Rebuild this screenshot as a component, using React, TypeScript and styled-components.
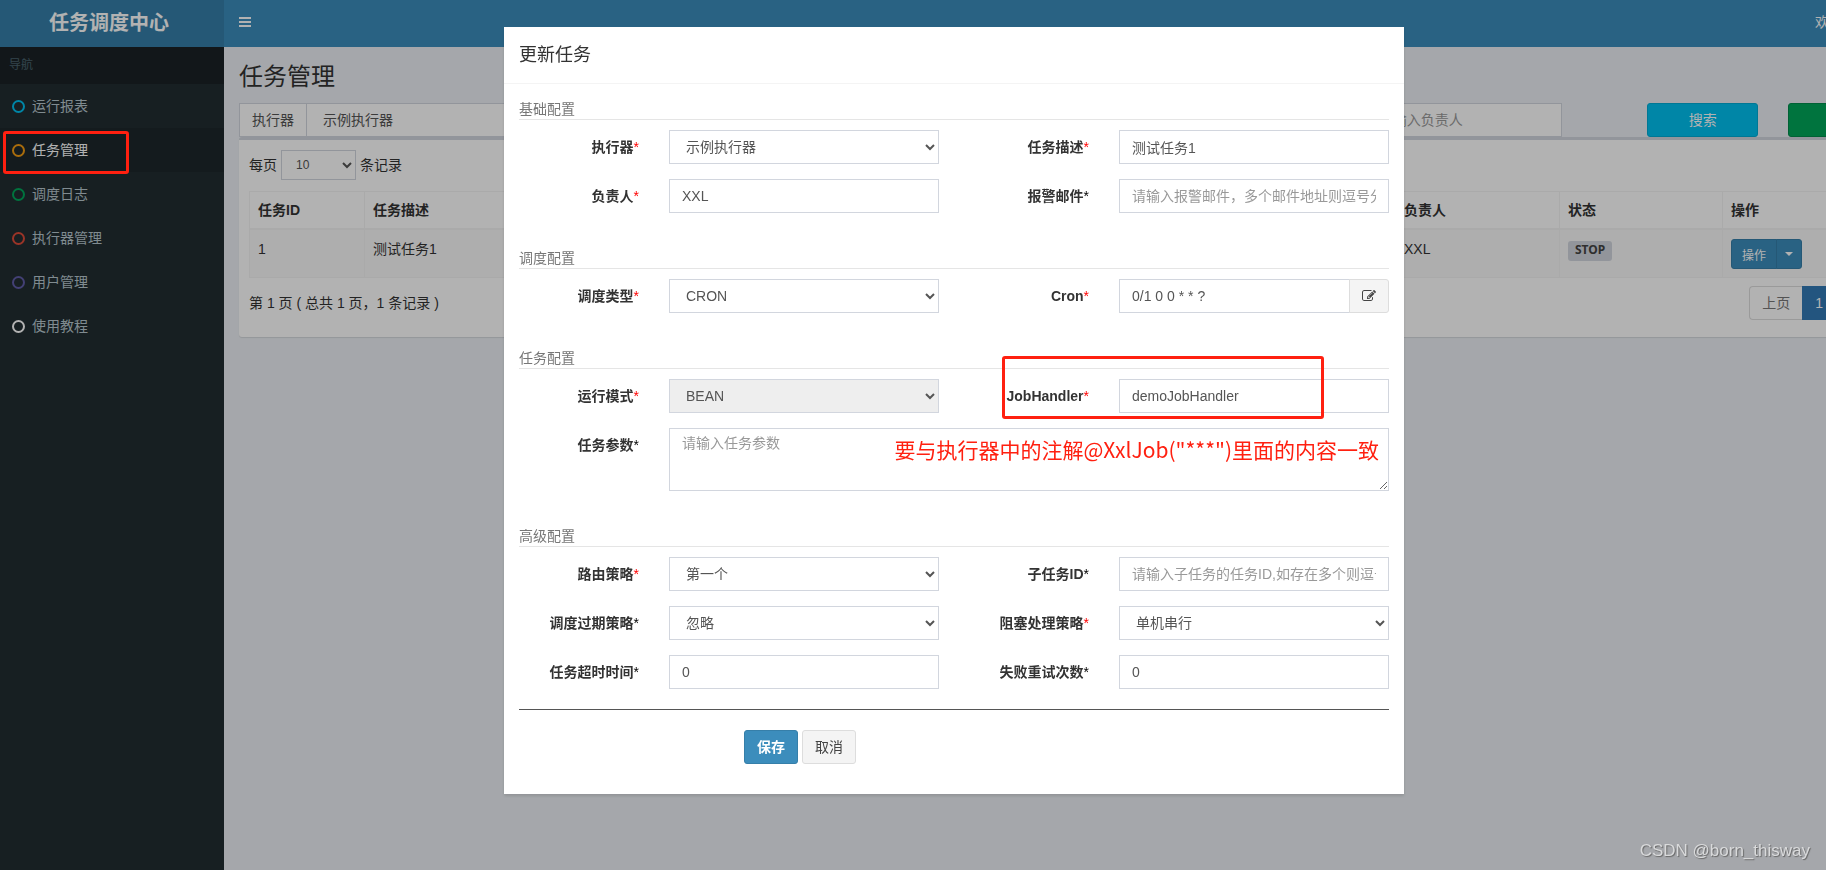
import React from 'react';
import styled, { createGlobalStyle, css } from 'styled-components';

const GlobalStyle = createGlobalStyle`
  *, *::before, *::after { box-sizing: border-box; }
  html, body, #root { height: 100%; }
  body {
    margin: 0;
    overflow: hidden;
    background: #ecf0f5;
    color: #333;
    font: 14px/20px "Liberation Sans", "Noto Sans CJK SC", sans-serif;
  }
  button, input, select, textarea { font-family: inherit; }
`;

const Viewport = styled.div`
  min-height: 100vh;
  overflow: hidden;
  display: flex;
`;

/* The console is wider than the window; its right part runs past the edge. */
const Frame = styled.div`
  flex: 1;
  min-width: 0;
  margin-right: -88px;
  display: flex;
`;

const Sidebar = styled.aside`
  flex: 0 0 224px;
  min-height: 100vh;
  background: #222d32;
`;

const Logo = styled.a`
  display: block;
  height: 47px;
  padding-right: 6px;
  background: #367fa9;
  color: #fff;
  font-size: 20px;
  font-weight: 700;
  line-height: 46px;
  text-align: center;
  text-decoration: none;
`;

const NavHeading = styled.div`
  padding: 8px 9px 9px;
  background: #1a2226;
  color: #4b646f;
  font-size: 12px;
`;

const NavList = styled.ul`
  list-style: none;
  margin: 0;
  padding: 0;
`;

const NavItem = styled.li`
  position: relative;
`;

const NavLink = styled.a<{ $active?: boolean }>`
  display: flex;
  align-items: center;
  gap: 7px;
  height: 44px;
  padding-left: 12px;
  background: ${p => (p.$active ? '#1e282c' : 'transparent')};
  color: ${p => (p.$active ? '#fff' : '#b8c7ce')};
  text-decoration: none;
`;

const Ring = styled.span<{ $color: string }>`
  width: 13px;
  height: 13px;
  border: 2px solid ${p => p.$color};
  border-radius: 50%;
`;

const markBox = css`
  position: absolute;
  z-index: 30;
  border: 3px solid #ff2010;
  border-radius: 3px;
  pointer-events: none;
`;

const NavMark = styled.span`
  ${markBox}
  left: 3px;
  top: 3px;
  width: 126px;
  height: 43px;
`;

const Main = styled.main`
  flex: 1;
  min-width: 0;
`;

const TopBar = styled.header`
  display: flex;
  align-items: center;
  justify-content: space-between;
  height: 47px;
  padding: 0 15px 3px;
  background: #3c8dbc;
  color: #fff;
`;

const MenuButton = styled.button`
  display: flex;
  padding: 0;
  border: 0;
  background: none;
  color: #fff;
`;

const UserLink = styled.a`
  width: 84px;
  color: #fff;
  text-decoration: none;
`;

const Content = styled.div`
  padding: 15px;
`;

const PageTitle = styled.h1`
  margin: 0 0 12px;
  font-size: 24px;
  font-weight: 400;
  line-height: 29px;
`;

const FilterRow = styled.div`
  display: grid;
  grid-template-columns: repeat(12, minmax(0, 1fr));
  gap: 30px;
`;

const InputGroup = styled.div`
  grid-column: span 3;
  display: flex;
`;

const Addon = styled.label`
  flex: none;
  height: 34px;
  padding: 6px 12px;
  border: 1px solid #d2d6de;
  border-right: 0;
  background: #fff;
  color: #555;
`;

const control = css`
  display: block;
  width: 100%;
  height: 34px;
  padding: 6px 12px;
  border: 1px solid #d2d6de;
  border-radius: 0;
  background-color: #fff;
  color: #555;
  font-size: 14px;
  line-height: 20px;
  opacity: 1;
  &::placeholder { color: #999; opacity: 1; }
`;

const Input = styled.input`${control}`;
const Select = styled.select`
  ${control}
  &:disabled { background-color: #eee; color: #555; opacity: 1; }
`;
const TextArea = styled.textarea`
  ${control}
  height: 63px;
  padding-top: 4px;
  resize: vertical;
`;

const OwnerFilter = styled.div`
  grid-column: 9 / span 2;
  width: 196px;
`;

const tones = {
  info: css`background: #00c0ef; border-color: #00acd6; color: #fff;`,
  success: css`background: #00a65a; border-color: #008d4c; color: #fff;`,
  primary: css`background: #3c8dbc; border-color: #367fa9; color: #fff;`,
  plain: css`background: #f4f4f4; border-color: #ddd; color: #444;`,
};

const Button = styled.button<{ $tone: keyof typeof tones; $strong?: boolean }>`
  height: 34px;
  padding: 0 12px;
  border: 1px solid;
  border-radius: 3px;
  font-size: 14px;
  font-weight: ${p => (p.$strong ? 700 : 400)};
  line-height: 20px;
  ${p => tones[p.$tone]}
`;

const Box = styled.section`
  height: 200px;
  border-top: 3px solid #d2d6de;
  border-radius: 3px;
  background: #fff;
  box-shadow: 0 1px 1px rgba(0, 0, 0, 0.1);
  padding: 10px;
`;

const LengthRow = styled.label`
  display: flex;
  align-items: center;
  gap: 4px;
  margin-bottom: 11px;
`;

const SmallSelect = styled.select`
  ${control}
  width: 75px;
  height: 30px;
  padding: 5px 10px;
  font-size: 12px;
  line-height: 18px;
`;

const Table = styled.table`
  width: 100%;
  table-layout: fixed;
  border-collapse: separate;
  border-spacing: 0;
  border: 1px solid #f4f4f4;
  border-right: 0;
  margin-bottom: 8px;
`;

const Th = styled.th<{ $width?: number }>`
  width: ${p => (p.$width ? `${p.$width}px` : 'auto')};
  padding: 8px;
  border-right: 1px solid #f4f4f4;
  border-bottom: 2px solid #f4f4f4;
  text-align: left;
`;

const Td = styled.td`
  height: 47px;
  padding: 9px 8px 8px;
  border-right: 1px solid #f4f4f4;
  background: #f9f9f9;
  vertical-align: top;
`;

const StatusTag = styled.small`
  display: block;
  width: fit-content;
  padding: 0 7px 2px;
  margin-top: 2px;
  border-radius: 3px;
  background: #d2d6de;
  color: #444;
  font: 700 12px/18px "Noto Sans", sans-serif;
`;

const SplitButton = styled.div`
  display: flex;
`;

const SmallButton = styled.button<{ $side: 'left' | 'right' }>`
  display: flex;
  align-items: center;
  justify-content: center;
  width: ${p => (p.$side === 'left' ? 46 : 26)}px;
  height: 30px;
  margin-left: ${p => (p.$side === 'left' ? 0 : -1)}px;
  padding: 0;
  border: 1px solid #367fa9;
  border-radius: ${p => (p.$side === 'left' ? '3px 0 0 3px' : '0 3px 3px 0')};
  background: #3c8dbc;
  color: #fff;
  font-size: 12px;
`;

const Caret = styled.span`
  border-top: 4px solid;
  border-left: 4px solid transparent;
  border-right: 4px solid transparent;
`;

const TableFooter = styled.div`
  display: flex;
  justify-content: space-between;
  align-items: center;
  height: 34px;
`;

const Pager = styled.nav`
  display: flex;
`;

const PageLink = styled.a<{ $current?: boolean }>`
  height: 34px;
  padding: 6px 12px;
  border: 1px solid ${p => (p.$current ? '#337ab7' : '#ddd')};
  background: ${p => (p.$current ? '#337ab7' : '#fff')};
  color: ${p => (p.$current ? '#fff' : '#777')};
  text-decoration: none;
  &:first-child { border-right: 0; border-radius: 4px 0 0 4px; }
  &:last-child { border-left: 0; border-radius: 0 4px 4px 0; }
`;

const Backdrop = styled.div`
  position: fixed;
  inset: 0 -88px 0 0;
  z-index: 10;
  padding: 27px 6px 0 0;
  background: rgba(0, 0, 0, 0.3);
`;

const Dialog = styled.div`
  width: 900px;
  max-width: 100%;
  margin: 0 auto;
  background: #fff;
  box-shadow: 0 2px 3px rgba(0, 0, 0, 0.125);
`;

const DialogHeader = styled.header`
  padding: 15px;
  border-bottom: 1px solid #f4f4f4;
`;

const DialogTitle = styled.h2`
  margin: 0;
  font-size: 18px;
  font-weight: 400;
  line-height: 26px;
`;

const Form = styled.form`
  padding: 15px 15px 30px;
`;

const Group = styled.fieldset`
  min-width: 0;
  margin: 0 0 35px;
  padding: 0;
  border: 0;
  &:last-of-type { margin-bottom: 20px; }
`;

const Legend = styled.legend`
  width: 100%;
  margin-bottom: 10px;
  padding: 0;
  border-bottom: 1px solid #e5e5e5;
  color: #777;
`;

const Fields = styled.div`
  position: relative;
  display: grid;
  grid-template-columns: minmax(0, 4fr) minmax(0, 9fr) minmax(0, 4fr) minmax(0, 9fr);
  gap: 15px 30px;
`;

const Label = styled.label`
  padding-top: 7px;
  font-weight: 700;
  text-align: right;
  white-space: nowrap;
`;

const Star = styled.span<{ $required?: boolean }>`
  color: ${p => (p.$required ? '#f00' : '#000')};
  font-weight: 400;
`;

const Addable = styled.div`
  display: flex;
`;

const EditButton = styled.button`
  flex: 0 0 40px;
  display: flex;
  align-items: center;
  justify-content: center;
  margin-left: -1px;
  padding: 0;
  border: 1px solid #ddd;
  border-radius: 0 3px 3px 0;
  background: #f4f4f4;
  color: #444;
`;

const WideField = styled.div`
  grid-column: span 3;
  position: relative;
`;

const HandlerMark = styled.span`
  ${markBox}
  top: -23px;
  right: 65px;
  width: 322px;
  height: 63px;
`;

const Note = styled.p`
  position: absolute;
  top: 6px;
  right: 10px;
  margin: 0;
  color: #ff2010;
  font: 21px/30px "Noto Sans CJK SC", sans-serif;
  white-space: nowrap;
  pointer-events: none;
`;

const Divider = styled.hr`
  margin: 0 0 20px;
  border: 0;
  border-top: 1px solid #555;
`;

const Actions = styled.div`
  display: flex;
  gap: 4px;
  padding-left: 225px;
`;

const Watermark = styled.div`
  position: fixed;
  right: 16px;
  bottom: 9px;
  z-index: 40;
  color: #d9dadb;
  font-size: 17px;
  line-height: 20px;
  text-shadow: 1px 1px 1px #666;
`;

function BarsIcon() {
  return (
    <svg width="12" height="10" viewBox="0 0 12 10" fill="currentColor" aria-hidden="true">
      <rect width="12" height="2" />
      <rect y="4" width="12" height="2" />
      <rect y="8" width="12" height="2" />
    </svg>
  );
}

function EditIcon() {
  return (
    <svg width="14" height="14" viewBox="0 0 1792 1792" fill="currentColor" aria-hidden="true">
      <path d="M888 1184l116-116-152-152-116 116v56h96v96h56zm440-720q-16-16-33 1l-350 350q-17 17-1 33t33-1l350-350q17-17 1-33zm80 594v190q0 119-84.5 203.5t-203.5 84.5h-832q-119 0-203.5-84.5t-84.5-203.5v-832q0-119 84.5-203.5t203.5-84.5h832q63 0 117 25 15 7 18 23 3 17-9 29l-49 49q-14 14-32 8-23-6-45-6h-832q-66 0-113 47t-47 113v832q0 66 47 113t113 47h832q66 0 113-47t47-113v-126q0-13 9-22l64-64q15-15 35-7t20 29zm-96-738l288 288-672 672h-288v-288zm444 132l-92 92-288-288 92-92q28-28 68-28t68 28l152 152q28 28 28 68t-28 68z" />
    </svg>
  );
}

const navItems = [
  { text: '运行报表', color: '#00c0ef' },
  { text: '任务管理', color: '#f39c12', active: true },
  { text: '调度日志', color: '#00a65a' },
  { text: '执行器管理', color: '#dd4b39' },
  { text: '用户管理', color: '#605ca8' },
  { text: '使用教程', color: '#fff' },
];

type FieldProps = {
  id: string;
  label: string;
  required?: boolean;
  children: React.ReactNode;
};

function Field({ id, label, required, children }: FieldProps) {
  return (
    <>
      <Label htmlFor={id}>
        {label}
        <Star $required={required}>*</Star>
      </Label>
      {children}
    </>
  );
}

function UpdateDialog() {
  return (
    <Backdrop>
      <Dialog role="dialog" aria-labelledby="dialog-title">
        <DialogHeader>
          <DialogTitle id="dialog-title">更新任务</DialogTitle>
        </DialogHeader>
        <Form>
          <Group>
            <Legend>基础配置</Legend>
            <Fields>
              <Field id="group" label="执行器" required>
                <Select id="group"><option>示例执行器</option></Select>
              </Field>
              <Field id="desc" label="任务描述" required>
                <Input id="desc" defaultValue="测试任务1" />
              </Field>
              <Field id="author" label="负责人" required>
                <Input id="author" defaultValue="XXL" />
              </Field>
              <Field id="email" label="报警邮件">
                <Input id="email" placeholder="请输入报警邮件，多个邮件地址则逗号分隔" />
              </Field>
            </Fields>
          </Group>
          <Group>
            <Legend>调度配置</Legend>
            <Fields>
              <Field id="schedule" label="调度类型" required>
                <Select id="schedule"><option>CRON</option></Select>
              </Field>
              <Field id="cron" label="Cron" required>
                <Addable>
                  <Input id="cron" defaultValue="0/1 0 0 * * ?" />
                  <EditButton type="button" aria-label="Cron"><EditIcon /></EditButton>
                </Addable>
              </Field>
            </Fields>
          </Group>
          <Group>
            <Legend>任务配置</Legend>
            <Fields>
              <Field id="mode" label="运行模式" required>
                <Select id="mode" disabled><option>BEAN</option></Select>
              </Field>
              <Field id="handler" label="JobHandler" required>
                <Input id="handler" defaultValue="demoJobHandler" />
              </Field>
              <Field id="param" label="任务参数">
                <WideField>
                  <TextArea id="param" placeholder="请输入任务参数" />
                  <Note>要与执行器中的注解@XxlJob("***")里面的内容一致</Note>
                </WideField>
              </Field>
              <HandlerMark />
            </Fields>
          </Group>
          <Group>
            <Legend>高级配置</Legend>
            <Fields>
              <Field id="route" label="路由策略" required>
                <Select id="route"><option>第一个</option></Select>
              </Field>
              <Field id="child" label="子任务ID">
                <Input id="child" placeholder="请输入子任务的任务ID,如存在多个则逗号分隔" />
              </Field>
              <Field id="misfire" label="调度过期策略">
                <Select id="misfire"><option>忽略</option></Select>
              </Field>
              <Field id="block" label="阻塞处理策略" required>
                <Select id="block"><option>单机串行</option></Select>
              </Field>
              <Field id="timeout" label="任务超时时间">
                <Input id="timeout" defaultValue="0" />
              </Field>
              <Field id="retry" label="失败重试次数">
                <Input id="retry" defaultValue="0" />
              </Field>
            </Fields>
          </Group>
          <Divider />
          <Actions>
            <Button type="button" $tone="primary" $strong>保存</Button>
            <Button type="button" $tone="plain">取消</Button>
          </Actions>
        </Form>
      </Dialog>
    </Backdrop>
  );
}

export default function App() {
  return (
    <Viewport>
      <GlobalStyle />
      <Frame>
        <Sidebar>
          <Logo href="#">任务调度中心</Logo>
          <NavHeading>导航</NavHeading>
          <NavList>
            {navItems.map(item => (
              <NavItem key={item.text}>
                <NavLink href="#" $active={item.active}>
                  <Ring $color={item.color} />
                  {item.text}
                </NavLink>
                {item.active && <NavMark />}
              </NavItem>
            ))}
          </NavList>
        </Sidebar>
        <Main>
          <TopBar>
            <MenuButton type="button" aria-label="导航"><BarsIcon /></MenuButton>
            <UserLink href="#">欢迎</UserLink>
          </TopBar>
          <Content>
            <PageTitle>任务管理</PageTitle>
            <FilterRow>
              <InputGroup>
                <Addon htmlFor="filter-group">执行器</Addon>
                <Select id="filter-group"><option>示例执行器</option></Select>
              </InputGroup>
              <OwnerFilter>
                <Input aria-label="负责人" placeholder="请输入负责人" />
              </OwnerFilter>
              <Button type="button" $tone="info">搜索</Button>
              <Button type="button" $tone="success">新增</Button>
            </FilterRow>
            <Box>
              <LengthRow>
                每页
                <SmallSelect><option>10</option></SmallSelect>
                条记录
              </LengthRow>
              <Table>
                <thead>
                  <tr>
                    <Th $width={115}>任务ID</Th>
                    <Th>任务描述</Th>
                    <Th $width={164}>负责人</Th>
                    <Th $width={163}>状态</Th>
                    <Th $width={166}>操作</Th>
                  </tr>
                </thead>
                <tbody>
                  <tr>
                    <Td>1</Td>
                    <Td>测试任务1</Td>
                    <Td>XXL</Td>
                    <Td><StatusTag>STOP</StatusTag></Td>
                    <Td>
                      <SplitButton>
                        <SmallButton type="button" $side="left">操作</SmallButton>
                        <SmallButton type="button" $side="right" aria-label="操作"><Caret /></SmallButton>
                      </SplitButton>
                    </Td>
                  </tr>
                </tbody>
              </Table>
              <TableFooter>
                <span>第 1 页 ( 总共 1 页，1 条记录 )</span>
                <Pager>
                  <PageLink href="#">上页</PageLink>
                  <PageLink href="#" $current>1</PageLink>
                  <PageLink href="#">下页</PageLink>
                </Pager>
              </TableFooter>
            </Box>
          </Content>
        </Main>
      </Frame>
      <UpdateDialog />
      <Watermark>CSDN @born_thisway</Watermark>
    </Viewport>
  );
}
